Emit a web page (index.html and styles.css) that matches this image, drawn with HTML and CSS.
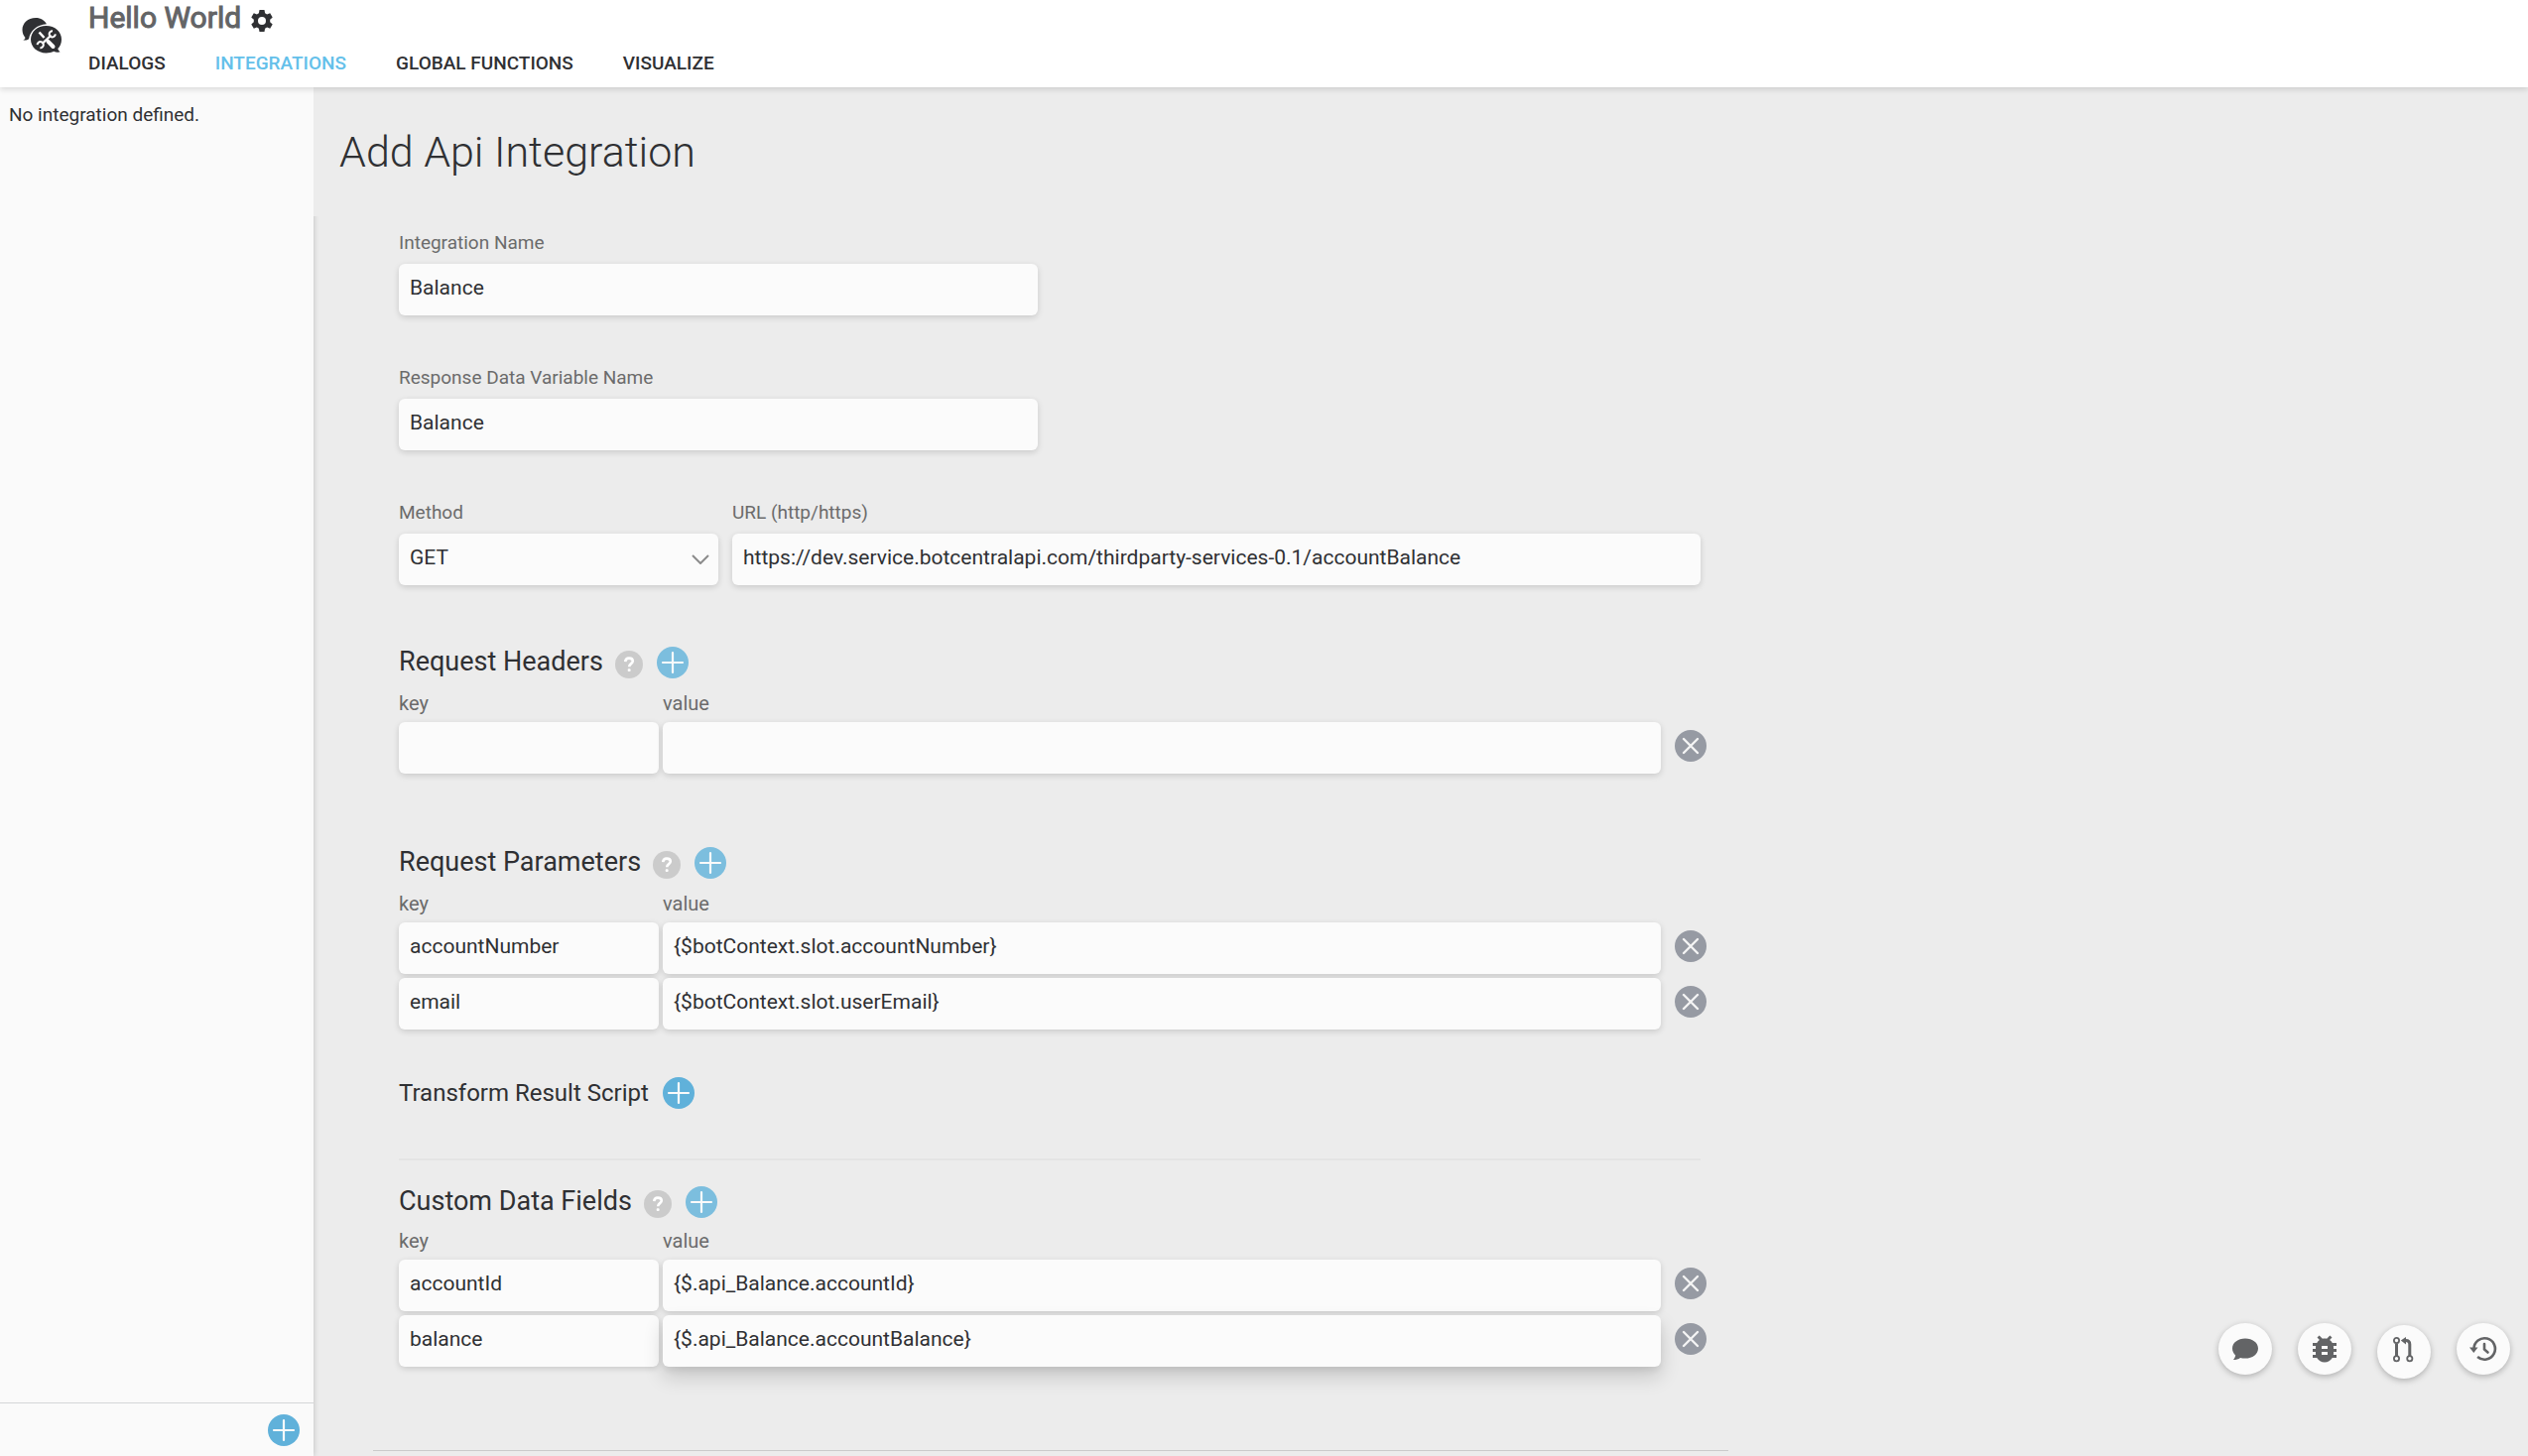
FILE: index.html
```html
<!DOCTYPE html>
<html lang="en">
<head>
<meta charset="utf-8">
<title>Hello World - Integrations</title>
<link rel="stylesheet" href="styles.css">
</head>
<body>
<svg class="sprite" aria-hidden="true">
  <symbol id="plus" viewBox="0 0 32 32"><circle cx="16" cy="16" r="16" fill="currentColor"/><path d="M16 6v20M6 16h20" stroke="#fafafa" stroke-width="2.2" stroke-linecap="round"/></symbol>
  <symbol id="help" viewBox="0 0 28 28"><circle cx="14" cy="14" r="14" fill="#cbcbcb"/><path d="M10.200 11.200c.2-2.400 1.600-3.600 3.800-3.600s3.800 1.100 3.800 3c0 2.500-3.600 2.600-3.600 5.600" fill="none" stroke="#fff" stroke-width="2.600"/><rect x="12.700" y="18.200" width="2.900" height="2.900" rx="1" fill="#fff"/></symbol>
  <symbol id="remove" viewBox="0 0 32 32"><circle cx="16" cy="16" r="16" fill="#969aa3"/><path d="M9 9l14 14M23 9L9 23" stroke="#f4f4f4" stroke-width="2.400" stroke-linecap="round"/></symbol>
</svg>
<header class="topbar">
  <svg class="logo" viewBox="0 0 42 38" aria-hidden="true">
    <path d="M14 1C6 1 .5 6.500 .5 13c0 3.300 1.200 6 3 8-.3 1.300-1 2-2.200 2.400 2.600.3 4.400 0 5.800-1.200C8.500 14 15 8 25 7.300 23 3.500 19.200 1 14 1z" fill="#2f3033"/>
    <path d="M24.500 9C15.500 9 9 15.200 9 22.700s6.500 13.700 15.500 13.700c3 0 5.500-.6 7.700-1.700 2 1 4.300 1.200 6.400.6-1.200-.7-2-1.800-2.300-3.200 2.300-2.400 3.700-5.700 3.700-9.400C40 15.200 33.500 9 24.500 9z" fill="#2f3033"/>
    <g fill="none" stroke="#fff">
      <path d="M17.500 15.500l5 5.500" stroke-width="2.600"/>
      <path d="M26.500 24.800l5 5.200" stroke-width="4" stroke-linecap="round"/>
      <path d="M20.500 27l9-8.500" stroke-width="2.400"/>
      <path d="M31 14.200a3.100 3.100 0 1 0 2.800 3.200M18.400 31.300a3.100 3.100 0 1 0-2.800-3.200" stroke-width="2"/>
    </g>
  </svg>
  <div class="brand">
    <div class="bot"><h1>Hello World</h1>
      <button class="icon gear" aria-label="Settings"><svg viewBox="0 0 22 24"><path fill="#2f3033" fill-rule="evenodd" d="M8.500 1h5l.6 3.300 2 1.100 3.100-1.200 2.500 4.300-2.500 2.200v2.500l2.500 2.200-2.500 4.300-3.100-1.200-2 1.200-.6 3.300h-5l-.6-3.300-2-1.200-3.100 1.200L.3 15.400l2.500-2.200v-2.500L.3 8.500l2.500-4.300 3.100 1.200 2-1.100zM11 8a4 4 0 1 0 0 8 4 4 0 0 0 0-8z"/></svg></button></div>
    <nav class="tabs"><a href="#">DIALOGS</a><a href="#" class="active">INTEGRATIONS</a><a href="#">GLOBAL FUNCTIONS</a><a href="#">VISUALIZE</a></nav>
  </div>
</header>
<div class="shell">
  <aside class="sidebar">
    <p>No integration defined.</p>
    <div class="sidefoot"><button class="icon add" aria-label="Add integration"><svg><use href="#plus"/></svg></button></div>
  </aside>
  <main>
    <h2 class="title">Add Api Integration</h2>
    <form class="panel">
      <div class="field half"><label for="name">Integration Name</label><input id="name" value="Balance"></div>
      <div class="field half"><label for="var">Response Data Variable Name</label><input id="var" value="Balance"></div>
      <div class="endpoint">
        <div class="field"><label for="method">Method</label>
          <div class="select"><select id="method"><option>GET</option></select><svg viewBox="0 0 18 10" aria-hidden="true"><path d="M1 1l8 8 8-8" fill="none" stroke="#8b8b8b" stroke-width="2"/></svg></div></div>
        <div class="field"><label for="url">URL (http/https)</label><input id="url" value="https://dev.service.botcentralapi.com/thirdparty-services-0.1/accountBalance"></div>
      </div>
      <section class="group headers">
        <div class="heading"><h3>Request Headers</h3><button type="button" class="icon help" aria-label="Help"><svg><use href="#help"/></svg></button><button type="button" class="icon add soft" aria-label="Add header"><svg><use href="#plus"/></svg></button></div>
        <div class="row keys"><label for="hk">key</label><label for="hv">value</label></div>
        <div class="row"><input id="hk"><input id="hv"><button type="button" class="icon remove" aria-label="Remove"><svg><use href="#remove"/></svg></button></div>
      </section>
      <section class="group params">
        <div class="heading"><h3>Request Parameters</h3><button type="button" class="icon help" aria-label="Help"><svg><use href="#help"/></svg></button><button type="button" class="icon add soft" aria-label="Add parameter"><svg><use href="#plus"/></svg></button></div>
        <div class="row keys"><label for="pk">key</label><label for="pv">value</label></div>
        <div class="row"><input id="pk" value="accountNumber"><input id="pv" value="{$botContext.slot.accountNumber}"><button type="button" class="icon remove" aria-label="Remove"><svg><use href="#remove"/></svg></button></div>
        <div class="row"><input aria-label="key" value="email"><input aria-label="value" value="{$botContext.slot.userEmail}"><button type="button" class="icon remove" aria-label="Remove"><svg><use href="#remove"/></svg></button></div>
      </section>
      <div class="heading script"><h4>Transform Result Script</h4><button type="button" class="icon add" aria-label="Add script"><svg><use href="#plus"/></svg></button></div>
      <section class="group custom">
        <div class="heading"><h3>Custom Data Fields</h3><button type="button" class="icon help" aria-label="Help"><svg><use href="#help"/></svg></button><button type="button" class="icon add soft" aria-label="Add field"><svg><use href="#plus"/></svg></button></div>
        <div class="row keys"><label for="ck">key</label><label for="cv">value</label></div>
        <div class="row"><input id="ck" value="accountId"><input id="cv" value="{$.api_Balance.accountId}"><button type="button" class="icon remove" aria-label="Remove"><svg><use href="#remove"/></svg></button></div>
        <div class="row"><input aria-label="key" value="balance"><input aria-label="value" class="raised" value="{$.api_Balance.accountBalance}"><button type="button" class="icon remove" aria-label="Remove"><svg><use href="#remove"/></svg></button></div>
      </section>
    </form>
    <hr class="end">
  </main>
</div>
<div class="tools">
  <button aria-label="Chat"><svg viewBox="0 0 30 30"><path fill="#636466" d="M15 4.500C7.500 4.500 2 8.900 2 14.500c0 2.700 1.200 5 3.200 6.900-.3 1.900-1.200 3.400-2.400 4.700 3 0 5.400-.9 7.200-2.200 1.600.4 3.200.7 5 .7 7.500 0 13-4.500 13-10.100S22.500 4.500 15 4.500z"/></svg></button>
  <button class="bug" aria-label="Debug"><svg viewBox="0 0 24 24"><path fill="#636466" d="M20 8h-2.810c-.45-.78-1.070-1.450-1.820-1.960L17 4.410 15.590 3l-2.170 2.170C12.960 5.060 12.490 5 12 5s-.96.060-1.410.17L8.410 3 7 4.410l1.620 1.630C7.880 6.550 7.260 7.220 6.810 8H4v2h2.090c-.05.33-.09.66-.09 1v1H4v2h2v1c0 .34.04.67.09 1H4v2h2.810c1.040 1.790 2.970 3 5.190 3s4.150-1.210 5.190-3H20v-2h-2.090c.05-.33.09-.66.09-1v-1h2v-2h-2v-1c0-.34-.04-.67-.09-1H20V8zm-6 8h-4v-2h4v2zm0-4h-4v-2h4v2z"/></svg></button>
  <button class="branch" aria-label="Versions"><svg viewBox="0 0 30 30"><g fill="none" stroke="#636466" stroke-width="1.800"><circle cx="7.500" cy="3.500" r="2.600"/><circle cx="7.500" cy="21.800" r="2.600"/><circle cx="20.800" cy="21.800" r="2.600"/><path stroke-width="3" d="M7.500 6.500v12.500M20.800 19V7.500c0-2.700-1.300-4-4-4h-1"/></g><path fill="#636466" d="M11.800 3.500L17 0v7.500z"/></svg></button>
  <button aria-label="History"><svg viewBox="0 0 30 30"><path d="M5.500 15a10.700 10.700 0 1 1 3.600 8" fill="none" stroke="#636466" stroke-width="2.600"/><path fill="#636466" d="M1 13.500h8.500L5.300 19z"/><path d="M16 10v5.500l3.500 3" fill="none" stroke="#636466" stroke-width="2.600" stroke-linecap="round"/></svg></button>
</div>
</body>
</html>
```
FILE: styles.css
```css
* { box-sizing: border-box; }
html, body { height: 100%; }
body {
  margin: 0;
  display: flex;
  flex-direction: column;
  overflow: hidden;
  background: #ececec;
  color: #2f3033;
  font: 21px/24px Roboto, sans-serif;
}
h1, h2, h3, h4, p { margin: 0; font-weight: 400; }
.sprite { position: absolute; width: 0; height: 0; }
.icon { display: block; flex: none; padding: 0; border: 0; background: none; width: 32px; height: 32px; }
.icon svg { display: block; width: 100%; height: 100%; }

.topbar {
  position: relative;
  z-index: 2;
  flex: none;
  display: flex;
  gap: 25px;
  height: 88px;
  padding-left: 22px;
  background: #fff;
  box-shadow: 0 2px 6px rgba(0, 0, 0, .14);
}
.logo { width: 42px; height: 38px; margin-top: 17px; }
.brand { display: flex; flex-direction: column; gap: 16px; }
.bot { display: flex; align-items: center; gap: 10px; height: 36px; }
.bot h1 { font-size: 30px; line-height: 36px; color: #636466; -webkit-text-stroke: 1px #636466; }
.gear { width: 22px; height: 24px; margin-top: 6px; }
.tabs { display: flex; gap: 50px; }
.tabs a { color: #2f3033; text-decoration: none; font-size: 19px; font-weight: 500; }
.tabs .active { color: #64c0ea; }

.shell { flex: 1; display: flex; min-height: 0; }
.sidebar {
  flex: none;
  display: flex;
  flex-direction: column;
  justify-content: space-between;
  width: 316px;
  background: #fafafa;
  box-shadow: 0 0 6px rgba(0, 0, 0, .2);
}
.sidebar p { padding: 16px 9px; font-size: 19px; }
.sidefoot { display: flex; justify-content: flex-end; height: 54px; padding: 11px 14px; border-top: 1px solid #d4d6d8; }
.add { color: #60b1da; }
.soft { color: #7cbede; }

main { flex: 1; min-width: 0; overflow: hidden; }
.title {
  position: relative;
  height: 130px;
  padding: 40px 26px;
  background: #ececec;
  font-size: 43px;
  line-height: 50px;
  font-weight: 300;
}
.panel { max-width: 1404px; padding: 15px 0 0 86px; }
.field { display: flex; flex-direction: column; gap: 9px; }
.half { width: 644px; margin-bottom: 51px; }
label { color: #6b6b6b; font-size: 19px; }
input, select {
  display: block;
  width: 100%;
  height: 52px;
  padding: 0 11px 4px;
  border: 0;
  border-radius: 6px;
  background: #fbfbfb;
  box-shadow: 0 2px 6px rgba(0, 0, 0, .15);
  color: #2f3033;
  font: 21px/24px Roboto, sans-serif;
  appearance: none;
}
.endpoint { display: grid; grid-template-columns: 322px 1fr; gap: 14px; width: 1312px; margin-bottom: 61px; }
.select { display: grid; align-items: center; }
.select > * { grid-area: 1 / 1; }
.select svg { width: 18px; height: 10px; margin-right: 9px; justify-self: end; }

.heading { display: flex; align-items: center; gap: 14px; height: 34px; }
h3 { font-size: 27px; line-height: 32px; padding-bottom: 2px; margin-right: -2px; }
h4 { font-size: 24px; line-height: 32px; }
.help { width: 28px; height: 28px; margin-top: 4px; }
.group { display: flex; flex-direction: column; gap: 4px; }
.row { display: grid; grid-template-columns: 262px 1006px 32px; column-gap: 4px; align-items: center; }
.row .remove { margin: 0 0 4px 10px; }
.keys { padding: 8px 0 3px; }
.keys label { font-size: 20px; }
.headers { margin-bottom: 73px; }
.script { margin-top: 47px; }
.custom { width: 1312px; margin-top: 49px; padding-top: 25px; border-top: 2px solid #e4e4e4; }
.custom .keys { padding-top: 6px; }
.raised { box-shadow: 0 10px 20px rgba(0, 0, 0, .16), 0 4px 6px rgba(0, 0, 0, .06); }
.end { width: 1366px; margin: 84px 0 0 60px; border: 0; border-top: 1px solid #cbcbcb; }

.tools { position: fixed; z-index: 3; right: 18px; bottom: 78px; display: flex; align-items: flex-start; gap: 26px; }
.tools button {
  display: grid;
  place-items: center;
  width: 54px;
  height: 52px;
  padding: 0;
  border: 0;
  border-radius: 50%;
  background: #fbfbfb;
  box-shadow: 0 2px 6px rgba(0, 0, 0, .26);
}
.tools svg { width: 30px; height: 30px; }
.tools .bug svg { width: 36px; height: 36px; }
.tools .branch { height: 54px; margin-top: 2px; }
```
